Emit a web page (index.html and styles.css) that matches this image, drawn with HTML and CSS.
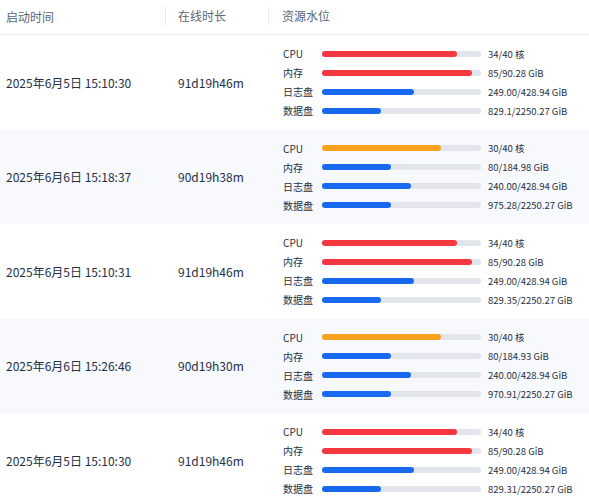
FILE: index.html
```html
<!DOCTYPE html>
<html lang="zh-CN">
<head>
<meta charset="utf-8">
<link rel="stylesheet" href="styles.css">
</head>
<body>
<div class="table">
  <div class="head">
    <div class="th c1">启动时间</div>
    <div class="th c2">在线时长</div>
    <div class="th c3">资源水位</div>
  </div>

  <div class="row">
    <div class="td c1">2025年6月5日 15:10:30</div>
    <div class="td c2">91d19h46m</div>
    <div class="td c3">
      <div class="res"><span class="lab">CPU</span><span class="track"><span class="fill red" style="width:85%"></span></span><span class="val">34/40 核</span></div>
      <div class="res"><span class="lab">内存</span><span class="track"><span class="fill red" style="width:94.2%"></span></span><span class="val">85/90.28 GiB</span></div>
      <div class="res"><span class="lab">日志盘</span><span class="track"><span class="fill blue" style="width:58%"></span></span><span class="val">249.00/428.94 GiB</span></div>
      <div class="res"><span class="lab">数据盘</span><span class="track"><span class="fill blue" style="width:36.8%"></span></span><span class="val">829.1/2250.27 GiB</span></div>
    </div>
  </div>

  <div class="row alt">
    <div class="td c1">2025年6月6日 15:18:37</div>
    <div class="td c2">90d19h38m</div>
    <div class="td c3">
      <div class="res"><span class="lab">CPU</span><span class="track"><span class="fill orange" style="width:75%"></span></span><span class="val">30/40 核</span></div>
      <div class="res"><span class="lab">内存</span><span class="track"><span class="fill blue" style="width:43.2%"></span></span><span class="val">80/184.98 GiB</span></div>
      <div class="res"><span class="lab">日志盘</span><span class="track"><span class="fill blue" style="width:56%"></span></span><span class="val">240.00/428.94 GiB</span></div>
      <div class="res"><span class="lab">数据盘</span><span class="track"><span class="fill blue" style="width:43.3%"></span></span><span class="val">975.28/2250.27 GiB</span></div>
    </div>
  </div>

  <div class="row">
    <div class="td c1">2025年6月5日 15:10:31</div>
    <div class="td c2">91d19h46m</div>
    <div class="td c3">
      <div class="res"><span class="lab">CPU</span><span class="track"><span class="fill red" style="width:85%"></span></span><span class="val">34/40 核</span></div>
      <div class="res"><span class="lab">内存</span><span class="track"><span class="fill red" style="width:94.2%"></span></span><span class="val">85/90.28 GiB</span></div>
      <div class="res"><span class="lab">日志盘</span><span class="track"><span class="fill blue" style="width:58%"></span></span><span class="val">249.00/428.94 GiB</span></div>
      <div class="res"><span class="lab">数据盘</span><span class="track"><span class="fill blue" style="width:36.9%"></span></span><span class="val">829.35/2250.27 GiB</span></div>
    </div>
  </div>

  <div class="row alt">
    <div class="td c1">2025年6月6日 15:26:46</div>
    <div class="td c2">90d19h30m</div>
    <div class="td c3">
      <div class="res"><span class="lab">CPU</span><span class="track"><span class="fill orange" style="width:75%"></span></span><span class="val">30/40 核</span></div>
      <div class="res"><span class="lab">内存</span><span class="track"><span class="fill blue" style="width:43.2%"></span></span><span class="val">80/184.93 GiB</span></div>
      <div class="res"><span class="lab">日志盘</span><span class="track"><span class="fill blue" style="width:56%"></span></span><span class="val">240.00/428.94 GiB</span></div>
      <div class="res"><span class="lab">数据盘</span><span class="track"><span class="fill blue" style="width:43.1%"></span></span><span class="val">970.91/2250.27 GiB</span></div>
    </div>
  </div>

  <div class="row">
    <div class="td c1">2025年6月5日 15:10:30</div>
    <div class="td c2">91d19h46m</div>
    <div class="td c3">
      <div class="res"><span class="lab">CPU</span><span class="track"><span class="fill red" style="width:85%"></span></span><span class="val">34/40 核</span></div>
      <div class="res"><span class="lab">内存</span><span class="track"><span class="fill red" style="width:94.2%"></span></span><span class="val">85/90.28 GiB</span></div>
      <div class="res"><span class="lab">日志盘</span><span class="track"><span class="fill blue" style="width:58%"></span></span><span class="val">249.00/428.94 GiB</span></div>
      <div class="res"><span class="lab">数据盘</span><span class="track"><span class="fill blue" style="width:36.9%"></span></span><span class="val">829.31/2250.27 GiB</span></div>
    </div>
  </div>
</div>
</body>
</html>
```

FILE: styles.css
```css
html, body {
  margin: 0;
  padding: 0;
  background: #ffffff;
}
body {
  font-family: "Noto Sans CJK SC", "Noto Sans", sans-serif;
  color: #253044;
  overflow: hidden;
}
.table {
  width: 589px;
}
.head {
  display: grid;
  grid-template-columns: 165px 103px 1fr;
  height: 34px;
  border-bottom: 1px solid #e9ecf1;
  align-items: center;
}
.th {
  font-size: 12px;
  color: #5b6678;
  line-height: 18px;
}
.head .c1 { padding-left: 6px; }
.head .c2, .head .c3 {
  border-left: 1px solid #e6e9ee;
  margin-top: -2px;
}
.head .c2 { padding-left: 12px; }
.head .c3 { padding-left: 13px; }
.row {
  display: grid;
  grid-template-columns: 165px 103px 1fr;
  align-items: center;
  padding: 9.25px 0;
}
.row.alt {
  background: #f7f9fd;
}
.td {
  font-size: 12px;
}
.row .c1 { padding-left: 6px; }
.row .c2 { padding-left: 13px; }
.row .c3 { padding-left: 15px; }
.res {
  display: flex;
  align-items: center;
  height: 19px;
  font-size: 9.5px;
}
.lab {
  width: 39px;
  flex: none;
  font-size: 10px;
}
.track {
  width: 159px;
  height: 6px;
  border-radius: 3px;
  background: #e2e6ec;
  flex: none;
  display: flex;
}
.fill {
  display: block;
  height: 6px;
  border-radius: 3px;
}
.red { background: #f5373f; }
.blue { background: #1769f0; }
.orange { background: #f7a21f; }
.val {
  margin-left: 7px;
  white-space: nowrap;
}
```
